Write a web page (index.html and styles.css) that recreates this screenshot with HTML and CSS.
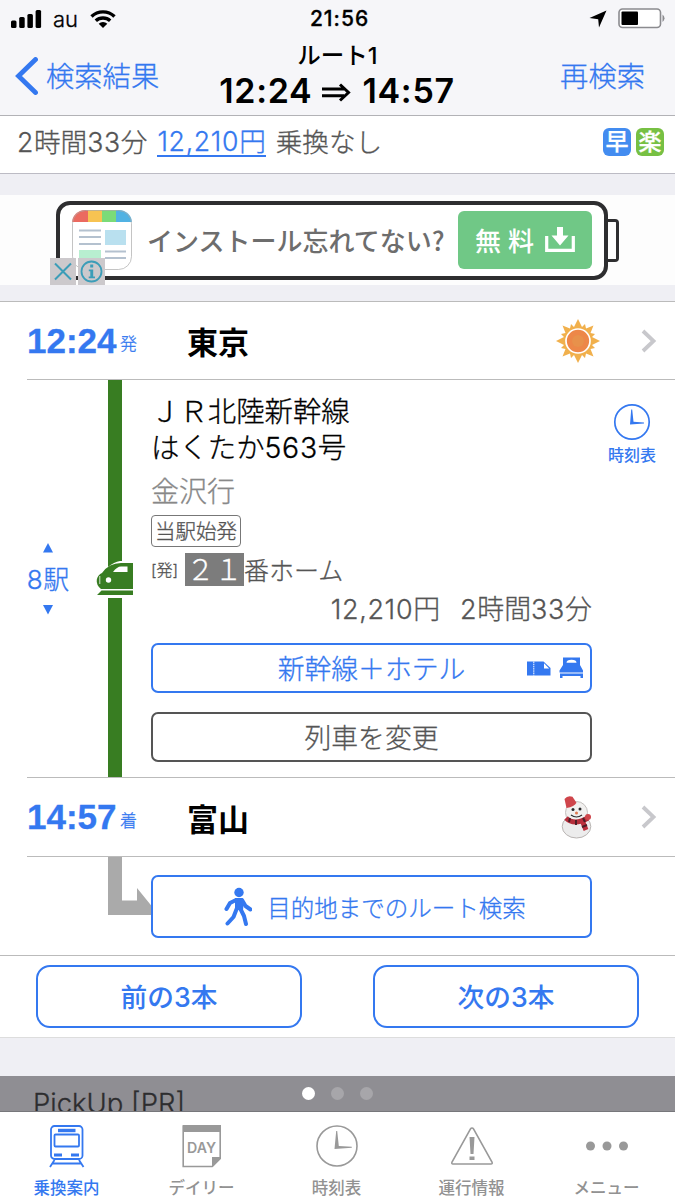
FILE: index.html
```html
<!DOCTYPE html>
<html lang="ja">
<head>
    <meta charset="UTF-8">
    <meta name="viewport" content="width=device-width, initial-scale=1.0">
    <title>乗換案内 - ルート1</title>
    <link rel="stylesheet" href="styles.css">
</head>
<body>
    <header>
        <div class="status-bar">
            <div class="status-left">
                <svg class="signal" width="31" height="18" viewBox="0 0 31 18">
                    <rect x="0" y="10.500" width="5.500" height="7.500" rx="1.500"/>
                    <rect x="8.200" y="7" width="5.500" height="11" rx="1.500"/>
                    <rect x="16.400" y="4" width="5.500" height="14" rx="1.500"/>
                    <rect x="24.600" y="0" width="5.500" height="18" rx="1.500"/>
                </svg>
                <span class="carrier">au</span>
                <svg class="wifi" width="26" height="18" viewBox="0 0 26 18">
                    <path d="M1.500 6.500a16.500 16.500 0 0 1 23 0M5.800 10.800a10.500 10.500 0 0 1 14.400 0" fill="none" stroke="#000" stroke-width="3.400"/>
                    <path d="M13 18l-4.300-4.200a6.300 6.300 0 0 1 8.600 0z"/>
                </svg>
            </div>
            <span class="clock">21:56</span>
            <div class="status-right">
                <svg width="18" height="18" viewBox="0 0 18 18"><path d="M17.500 0.500L10 17.500l-.8-8.300L0.500 8z"/></svg>
                <svg width="48" height="21" viewBox="0 0 48 21">
                    <rect x="1" y="1" width="41.500" height="18.500" rx="3.500" fill="#fff" stroke="#8b8b8f" stroke-width="1.600"/>
                    <rect x="3.500" y="3.500" width="16.500" height="13.500" rx="1"/>
                    <path d="M44.500 6.500q4 3.700 0 7.500z" fill="#8b8b8f"/>
                </svg>
            </div>
        </div>
        <nav class="title-bar">
            <a class="back" href="#">
                <svg width="23" height="38" viewBox="0 0 23 38"><path d="M20.500 2.500L3.500 19l17 16.500" fill="none" stroke="#3478f0" stroke-width="4.800" stroke-linecap="round"/></svg>
                検索結果
            </a>
            <div class="title">
                <p>ルート1</p>
                <h1>12:24 <svg width="30" height="19" viewBox="0 0 30 19"><path d="M0 6h22M0 12.800h22M18 1.500l8.500 8-8.500 8" fill="none" stroke="#000" stroke-width="3"/></svg> 14:57</h1>
            </div>
            <a class="research" href="#">再検索</a>
        </nav>
    </header>

    <section class="summary">
        <span><span class="num">2</span>時間<span class="num">33</span>分</span>
        <a href="#"><span class="num">12,210</span>円</a>
        <span>乗換なし</span>
        <div class="badges">
            <b class="fast">早</b>
            <b class="easy">楽</b>
        </div>
    </section>

    <section class="ad">
        <div class="phone">
            <svg width="60" height="60" viewBox="0 0 60 60">
                <defs><clipPath id="appIcon"><rect width="60" height="60" rx="13"/></clipPath></defs>
                <g clip-path="url(#appIcon)">
                    <path fill="#fff" d="M0 0h60v60H0z"/>
                    <path fill="#eb6a60" d="M0 0h16v12H0z"/>
                    <path fill="#f7c352" d="M16 0h14v12H16z"/>
                    <path fill="#7bdb78" d="M30 0h14v12H30z"/>
                    <path fill="#51b2e3" d="M44 0h16v12H44z"/>
                </g>
                <rect x=".5" y=".5" width="59" height="59" rx="13" fill="none" stroke="#aaa" stroke-width=".7"/>
                <path d="M7 20.500h22M7 27h22M7 34h22M33 41.500h21M33 48h21" stroke="#b4c1cf" stroke-width="2"/>
                <path fill="#b9e0ef" d="M33 20h21v15H33z"/>
                <path fill="#b8efd0" d="M7 40h22v13H7z"/>
            </svg>
            <p>インストール忘れてない?</p>
            <a class="free" href="#">無料
                <svg width="30" height="26" viewBox="0 0 30 26"><path d="M1.700 9v14.300h26.600V9" fill="none" stroke="#fff" stroke-width="3.200"/><path d="M12 0h6v8.500h5.500L15 18.500 6.500 8.500H12z" fill="#fff"/></svg>
            </a>
        </div>
        <div class="phone-end"></div>
        <div class="ad-marks">
            <svg width="26" height="27" viewBox="0 0 26 27"><path d="M5 5.500l16 16M21 5.500l-16 16" stroke="#3c9db8" stroke-width="2" fill="none"/></svg>
            <svg width="27" height="27" viewBox="0 0 27 27"><circle cx="13.500" cy="13.500" r="10" fill="none" stroke="#3c9db8" stroke-width="1.800"/><path d="M12.200 6.500h3v3h-3zM10.800 11.500h4.400v7H17v1.800h-6.300v-1.800h1.600v-5.200h-1.500z" fill="#3c9db8"/></svg>
        </div>
    </section>

    <main>
        <section class="station first">
            <time>12:24</time><small>発</small>
            <h2>東京</h2>
            <svg class="weather" width="44" height="44" viewBox="-22 -22 44 44">
                <path fill="#f1b04c" d="M0-22L4-14 7-17 8-12.500 15.500-15.500 12.500-8 17-7 14-4 22 0 14 4 17 7 12.500 8 15.500 15.500 8 12.500 7 17 4 14 0 22-4 14-7 17-8 12.500-15.500 15.500-12.500 8-17 7-14 4-22 0-14-4-17-7-12.500-8-15.500-15.500-8-12.500-7-17-4-14z"/>
                <circle r="12" fill="#ed8748" stroke="#fff" stroke-width="1.700"/>
                <circle r="6" fill="#e8914b"/>
            </svg>
            <svg class="arrow" width="16" height="24" viewBox="0 0 16 24"><path d="M2 2l10.500 10L2 22" fill="none" stroke="#c8c8cc" stroke-width="3.800"/></svg>
        </section>

        <section class="leg">
            <div class="stops">
                <svg width="12" height="10" viewBox="0 0 12 10"><path d="M6 0l5 9.500H1z" fill="#3478f0"/></svg>
                <span><span class="num">8</span>駅</span>
                <svg width="12" height="10" viewBox="0 0 12 10"><path d="M6 9.500L1 0h10z" fill="#3478f0"/></svg>
            </div>
            <div class="rail">
                <svg width="40" height="37" viewBox="0 0 40 37">
                    <path fill="#fff" d="M9 0h24v37H9z"/>
                    <path fill="#387d22" d="M12 0h12q-6 1-12 6z"/>
                    <path fill="#387d22" d="M37 2v26H5Q0 24 .8 18.500 2 13.500 6 12 13 2 25 2zM1 34L5.500 29.500H37V34z"/>
                    <path fill="#fff" d="M17 11q4-5.500 8-5.500h6.500V11z"/>
                    <circle cx="12.500" cy="19" r="2.700" fill="#fff"/>
                    <path d="M3.800 15v8" stroke="#fff" stroke-width=".8"/>
                </svg>
            </div>
            <div class="detail">
                <h3>ＪＲ北陸新幹線<br>はくたか<span class="num">563</span>号</h3>
                <p class="bound">金沢行</p>
                <p class="origin"><span>当駅始発</span></p>
                <p class="platform"><small>[発]</small><b>２１</b>番ホーム</p>
                <p class="fare"><span><span class="num">12,210</span>円</span><span><span class="num">2</span>時間<span class="num">33</span>分</span></p>
                <a class="option hotel" href="#">新幹線＋ホテル
                    <svg width="56" height="22" viewBox="0 0 56 22">
                        <path fill="#3478f0" d="M0 4.500h16.500L23.500 11v7.500H0z"/>
                        <path d="M6.800 4.500v14" stroke="#fff" stroke-dasharray="1.500 .7"/>
                        <path fill="#fff" d="M17 6.300v5.200h5.200z"/>
                        <path fill="#3478f0" d="M36 .5h17V8l3 5.500V15.500H32.500v-2L36 8zM33 16.500h23V21h-2.500v-2h-18v2H33z"/>
                        <path fill="#fff" d="M39.500 5.800q0-3 5-3t5 3z"/>
                    </svg>
                </a>
                <a class="option" href="#">列車を変更</a>
            </div>
            <a class="timetable" href="#">
                <svg width="38" height="38" viewBox="0 0 38 38"><circle cx="19" cy="19" r="17.200" fill="none" stroke="#3478f0" stroke-width="1.700"/><path d="M17 21.500l1.200-15h1l1.300 12.300 10.500.7v1z" fill="#3478f0"/></svg>
                時刻表
            </a>
        </section>

        <section class="station last">
            <time>14:57</time><small>着</small>
            <h2>富山</h2>
            <svg class="weather" width="44" height="44" viewBox="0 0 44 44">
                <ellipse cx="20.500" cy="31.500" rx="14.300" ry="11.500" fill="#ececec" stroke="#b9b5b3"/>
                <circle cx="20.500" cy="17.500" r="11" fill="#f1f0ef" stroke="#c4c0be"/>
                <path fill="#cf454b" d="M8.500 4q3-4 8-2.300l4 6q-2 4-10 5.300z"/>
                <path d="M10 23q8 8 22 0" stroke="#b52e3b" stroke-width="5" fill="none"/>
                <path d="M26 25l4 10" stroke="#bd303d" stroke-width="5"/>
                <path d="M14 23l-1 4M20 25v5M27 23l2 4M26 32l5-2" stroke="#4c1e26" stroke-width="2"/>
                <circle cx="32" cy="22" r="3" fill="#cf454b"/>
                <g fill="#29292b"><circle cx="17" cy="14.500" r="1.500"/><circle cx="24" cy="14" r="1.500"/></g>
                <circle cx="20.500" cy="18" r="1.500" fill="#e07950"/>
                <path d="M15 20q5.500 4 11 0" fill="none" stroke="#29292b" stroke-width="1.200"/>
            </svg>
            <svg class="arrow" width="16" height="24" viewBox="0 0 16 24"><path d="M2 2l10.500 10L2 22" fill="none" stroke="#c8c8cc" stroke-width="3.800"/></svg>
        </section>

        <section class="walk">
            <svg class="elbow" width="44" height="59" viewBox="0 0 44 59"><path d="M0 0h14v43.500h15V31l15 18.500V58H0z" fill="#aaa"/></svg>
            <a class="option" href="#">
                <svg width="28" height="40" viewBox="0 0 28 40">
                    <circle cx="15" cy="5.500" r="4.700" fill="#3478f0"/>
                    <path d="M11 11h7l2 3-1 9h-8V13z" fill="#3478f0"/>
                    <path d="M12 13L6 16 2.500 22M18 13l3.500 6 5 3.500M13 21l-3.500 9L3.500 36.500M16 21l4 8 2 8" fill="none" stroke="#3478f0" stroke-width="4" stroke-linecap="round" stroke-linejoin="round"/>
                </svg>
                目的地までのルート検索
            </a>
        </section>

        <section class="pager">
            <a href="#">前の3本</a>
            <a href="#">次の3本</a>
        </section>
    </main>

    <section class="pickup">
        <p>PickUp [PR]</p>
        <div class="dots"><i class="on"></i><i></i><i></i></div>
    </section>

    <footer>
        <a class="active" href="#">
            <svg width="44" height="44" viewBox="0 0 44 44" fill="none" stroke="#3478f0" stroke-width="1.800">
                <rect x="6" y="1" width="31.500" height="33" rx="3.500"/>
                <rect x="9.500" y="9.500" width="24.500" height="12" rx="1"/>
                <path d="M13 5.500h17.500" stroke-width="3.400"/>
                <path d="M9 30h8M26 30h8" stroke-width="3"/>
                <path d="M9.500 35L5 42M34 35l4.500 7M7.500 38.500h28.500"/>
            </svg>
            乗換案内
        </a>
        <a href="#">
            <svg width="44" height="44" viewBox="0 0 44 44">
                <path d="M3.200 1h37v32.500l-8 8h-29z" fill="none" stroke="#999" stroke-width="1.600"/>
                <path d="M3 0h38v7H3zM41 32v1.500L32.500 42H32V32z" fill="#999"/>
                <text x="21.500" y="27.500" text-anchor="middle" class="day">DAY</text>
            </svg>
            デイリー
        </a>
        <a href="#">
            <svg width="44" height="44" viewBox="0 0 44 44"><circle cx="22" cy="21" r="20" fill="none" stroke="#999" stroke-width="1.600"/><path d="M19.500 24l1.700-18h1l1.600 15 13 .8v1z" fill="#999"/></svg>
            時刻表
        </a>
        <a href="#">
            <svg width="44" height="44" viewBox="0 0 44 44"><path d="M22 3q1 0 1.500 1L42 37q.8 2-1 2H3q-1.800 0-1-2L20.500 4Q21 3 22 3z" fill="none" stroke="#999" stroke-width="1.600"/><path d="M19.500 12h5l-1 17h-3zM19.500 31.500h5v3.500h-5z" fill="#999"/></svg>
            運行情報
        </a>
        <a href="#">
            <svg width="44" height="44" viewBox="0 0 44 44" fill="#999"><circle cx="5.500" cy="21" r="4.500"/><circle cx="22" cy="21" r="4.500"/><circle cx="38.500" cy="21" r="4.500"/></svg>
            メニュー
        </a>
    </footer>
</body>
</html>
```

FILE: styles.css
```css
* {
    box-sizing: border-box;
}
body {
    font-family: Inter, "Noto Sans CJK JP", sans-serif;
    font-weight: 300;
    -webkit-text-stroke: 0.3px;
    margin: 0;
    width: 675px;
    height: 1200px;
    overflow: hidden;
    background-color: #efeff4;
    color: #555;
    white-space: nowrap;
}
h1, h2, h3, p {
    margin: 0;
}
a {
    color: #3478f0;
    text-decoration: none;
}
svg {
    display: block;
    flex: none;
}
.num {
    letter-spacing: 0.7px;
}

/* header */
header {
    height: 116px;
    background-color: #f6f6f9;
    border-bottom: 1px solid #b2b2b6;
    color: #000;
}
.status-bar {
    display: grid;
    grid-template-columns: 1fr auto 1fr;
    align-items: center;
    height: 37px;
    padding: 0 9px 0 11px;
    font-size: 21px;
}
.status-left, .status-right {
    display: flex;
    align-items: center;
}
.status-right {
    justify-content: flex-end;
    gap: 11px;
}
.carrier {
    margin: 0 12px 0 11px;
    font-size: 22px;
}
.clock {
    margin-left: 2px;
    font-weight: 500;
    letter-spacing: 1px;
}
.title-bar {
    display: grid;
    grid-template-columns: 1fr auto 1fr;
    height: 78px;
    padding: 0 15px;
}
.back, .research {
    display: flex;
    align-items: center;
    height: 75px;
    font-size: 28.3px;
}
.back {
    gap: 8px;
}
.back svg {
    margin-top: 3px;
}
.research {
    justify-content: flex-end;
    padding-right: 15px;
}
.title {
    text-align: center;
}
.title p {
    height: 36px;
    line-height: 37px;
    font-size: 23.5px;
    font-weight: 500;
    -webkit-text-stroke: 0;
}
.title h1 {
    display: flex;
    align-items: center;
    gap: 10px;
    height: 34px;
    margin-left: -1px;
    font-size: 34px;
    font-weight: 600;
    letter-spacing: 0.7px;
    -webkit-text-stroke: 0;
}
.title h1 svg {
    margin-top: 5px;
}

/* summary */
.summary {
    display: flex;
    align-items: center;
    gap: 10px;
    height: 58px;
    padding: 0 11px 8px 17px;
    background-color: #fff;
    border-bottom: 1px solid #bcbbc4;
    font-size: 26.6px;
}
.summary a {
    margin-top: 2px;
    line-height: 28px;
    border-bottom: 2px solid #3478f0;
}
.badges {
    display: flex;
    gap: 5px;
    margin: 2px 0 0 auto;
}
.badges b {
    width: 28px;
    height: 28px;
    border-radius: 6px;
    color: #fff;
    font-size: 23px;
    font-weight: 500;
    line-height: 29px;
    text-align: center;
}
.badges .fast {
    background-color: #438cf0;
}
.badges .easy {
    background-color: #77c043;
}

/* banner */
.ad {
    position: relative;
    display: flex;
    align-items: center;
    height: 90px;
    margin: 21px 0 16px;
    padding-left: 56px;
    background-color: #fdfdfd;
    -webkit-text-stroke: 0;
}
.phone {
    display: flex;
    align-items: center;
    width: 552px;
    height: 79px;
    padding: 0 12px;
    background-color: #fff;
    border: 4px solid #2e2e30;
    border-radius: 14px;
}
.phone p {
    margin: 0 0 2px 15px;
    color: #6d6d6d;
    font-family: "Noto Sans CJK JP", sans-serif;
    font-size: 26px;
    font-weight: 500;
}
.free {
    display: flex;
    align-items: center;
    gap: 4px;
    width: 134px;
    height: 58px;
    margin-left: auto;
    padding: 0 0 2px 17px;
    background-color: #70c886;
    border-radius: 6px;
    color: #fff;
    font-size: 26px;
    font-weight: 500;
    letter-spacing: 7px;
}
.free svg {
    margin-top: 2px;
}
.phone-end {
    width: 11px;
    height: 43px;
    border: 3px solid #2e2e30;
    border-left: none;
    border-radius: 0 4px 4px 0;
}
.ad-marks {
    position: absolute;
    left: 50px;
    bottom: 0;
    display: flex;
    gap: 2px;
}
.ad-marks svg {
    background-color: #ccc9cc;
}

/* route */
main {
    height: 737px;
    background-color: #fff;
    border-top: 1px solid #bbb;
    border-bottom: 1px solid #ddd;
}
.station {
    display: flex;
    align-items: center;
    height: 79px;
    margin-left: 27px;
    padding-right: 18px;
    border-bottom: 1px solid #bbb;
    color: #3478f0;
}
.station.first {
    height: 78px;
}
.station time {
    width: 93px;
    font-family: "Liberation Sans", sans-serif;
    font-size: 35px;
    font-weight: bold;
}
.station small {
    width: 67px;
    margin-top: 4px;
    font-size: 17px;
}
.station h2 {
    color: #000;
    font-size: 31px;
    font-weight: 600;
    -webkit-text-stroke: 0;
}
.weather {
    margin-left: auto;
}
.arrow {
    margin-left: 41px;
}
.leg {
    display: flex;
    height: 398px;
    margin-left: 27px;
    border-bottom: 1px solid #bbb;
}
.stops {
    display: flex;
    flex-direction: column;
    align-items: center;
    gap: 10px;
    width: 42px;
    padding-top: 163px;
    color: #3478f0;
    font-size: 26px;
}
.stops > span {
    line-height: 34px;
    margin-bottom: -2px;
}
.rail {
    position: relative;
    width: 14px;
    margin-left: 39px;
    background-color: #387d22;
}
.rail svg {
    position: absolute;
    top: 181px;
    left: -12px;
}
.detail {
    width: 441px;
    margin-left: 29px;
    padding-top: 14px;
}
.detail h3 {
    color: #000;
    font-size: 28.4px;
    font-weight: 300;
    line-height: 36px;
}
.bound {
    margin-top: 5px;
    color: #888;
    font-size: 28px;
    line-height: 42px;
}
.origin {
    display: flex;
    margin-top: 2px;
}
.origin span {
    width: 90px;
    height: 32px;
    border: 1px solid #777;
    border-radius: 4px;
    font-size: 20.5px;
    line-height: 31px;
    text-align: center;
}
.platform {
    display: flex;
    align-items: center;
    height: 34px;
    margin-top: 5px;
    font-size: 25px;
}
.platform small {
    width: 34px;
    font-size: 16px;
}
.platform b {
    width: 59px;
    height: 33px;
    background-color: #7c7c7c;
    color: #fff;
    font-size: 28px;
    font-weight: 300;
    line-height: 35px;
    text-align: center;
}
.fare {
    display: flex;
    justify-content: flex-end;
    gap: 20px;
    height: 45px;
    font-size: 26.9px;
    line-height: 47px;
}
.option {
    display: flex;
    align-items: center;
    justify-content: center;
    width: 441px;
    height: 50px;
    padding-bottom: 2px;
    border: 2px solid #555;
    border-radius: 7px;
    color: #555;
    font-size: 26.8px;
}
.option + .option {
    margin-top: 19px;
}
.hotel {
    position: relative;
    margin-top: 12px;
    border-color: #3478f0;
    color: #3478f0;
}
.hotel svg {
    position: absolute;
    top: 12px;
    right: 7px;
}
.timetable {
    display: flex;
    flex-direction: column;
    align-items: center;
    gap: 2px;
    margin: 23px 0 0 16px;
    font-size: 16px;
    font-weight: 500;
    line-height: 24px;
    -webkit-text-stroke: 0;
}
.walk {
    display: flex;
    height: 99px;
    padding-left: 108px;
    border-bottom: 1px solid #bbb;
}
.walk .option {
    gap: 15px;
    height: 63px;
    margin: 18px 0 0 -1px;
    padding: 0 0 0 7px;
    background-color: #fff;
    border-color: #3478f0;
    color: #3478f0;
    font-size: 23.5px;
}
.pager {
    display: flex;
    justify-content: space-between;
    padding: 9px 36px 0;
}
.pager a {
    width: 266px;
    height: 63px;
    border: 2px solid #3478f0;
    border-radius: 14px;
    font-size: 26.7px;
    font-weight: 500;
    line-height: 60px;
    text-align: center;
    -webkit-text-stroke: 0;
}

/* bottom */
.pickup {
    position: relative;
    height: 36px;
    margin-top: 38px;
    padding: 9px 33px 0;
    overflow: hidden;
    background-color: #8f8e93;
    border-bottom: 1px solid #77777b;
}
.pickup p {
    color: #2d2d2f;
    font-size: 27.5px;
    line-height: 36px;
}
.dots {
    position: absolute;
    top: 11px;
    left: 302px;
    display: flex;
    gap: 16px;
}
.dots i {
    width: 13px;
    height: 13px;
    border-radius: 50%;
    background-color: #a7a6aa;
}
.dots .on {
    background-color: #fff;
}
footer {
    display: flex;
    height: 88px;
    margin-left: -1px;
    padding-top: 13px;
    background-color: #fff;
    -webkit-text-stroke: 0;
}
footer a {
    display: flex;
    flex: none;
    flex-direction: column;
    align-items: center;
    gap: 7px;
    width: 135px;
    color: #929292;
    font-size: 16.5px;
    font-weight: 500;
    line-height: 25px;
}
footer .active {
    color: #3478f0;
}
.day {
    fill: #999;
    font-size: 14.2px;
    font-weight: 600;
}
```
